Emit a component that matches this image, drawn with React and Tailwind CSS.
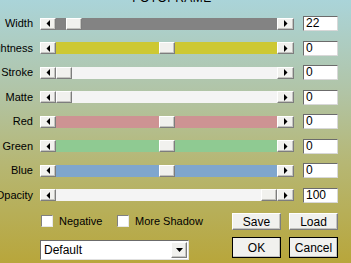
import React from 'react';

const rows = [
  { label: 'Width', track: 'bg-[#838383]', thumb: 66, value: '22' },
  { label: 'Brightness', track: 'bg-[#cdc833]', thumb: 159, value: '0' },
  { label: 'Stroke', track: 'bg-[#f4f4f4]', thumb: 56, value: '0' },
  { label: 'Matte', track: 'bg-[#f4f4f4]', thumb: 56, value: '0' },
  { label: 'Red', track: 'bg-[#cd9393]', thumb: 159, value: '0' },
  { label: 'Green', track: 'bg-[#8fca92]', thumb: 159, value: '0' },
  { label: 'Blue', track: 'bg-[#7fa6cd]', thumb: 159, value: '0' },
  { label: 'Opacity', track: 'bg-[#f4f4f4]', thumb: 261, value: '100' },
];

// raised 3D face used for scroll buttons, thumbs and push buttons
const raised =
  'bg-[#f1f1ee] border-t border-l border-t-white border-l-white border-b border-r border-b-[#7d7d7d] border-r-[#7d7d7d] shadow-[inset_-1px_-1px_0_#c4c4c0]';

const Arrow = ({ dir }) => (
  <svg width="4" height="7" viewBox="0 0 4 7">
    {dir === 'left' ? <path d="M4 0V7L0.5 3.5Z" fill="#000" /> : <path d="M0 0V7L3.5 3.5Z" fill="#000" />}
  </svg>
);

const Slider = ({ track, thumb }) => (
  <div className="flex h-[12px] w-[254px]">
    <div className={`${raised} w-[16px] h-full flex items-center justify-center shrink-0`}>
      <Arrow dir="left" />
    </div>
    <div className={`relative flex-1 h-full ${track}`}>
      <div className={`${raised} absolute top-0 h-full w-[16px]`} style={{ left: thumb - 56 }} />
    </div>
    <div className={`${raised} w-[17px] h-full flex items-center justify-center shrink-0`}>
      <Arrow dir="right" />
    </div>
  </div>
);

const Check = ({ label, className = '' }) => (
  <div className={`flex items-center gap-[6px] whitespace-nowrap shrink-0 leading-[12px] ${className}`}>
    <div className="w-[12px] h-[12px] shrink-0 bg-white border-t border-l border-[#808080] border-b-[#e8e8e8] border-r-[#e8e8e8] border-b border-r" />
    <span>{label}</span>
  </div>
);

const Button = ({ children, def }) => (
  <div
    className={`w-[49px] flex items-center justify-center ${raised} ${
      def ? 'h-[21px] outline outline-1 -outline-offset-1 outline-black' : 'h-[17px]'
    }`}
  >
    {children}
  </div>
);

export default function App() {
  return (
    <div
      className="w-[351px] h-[263px] overflow-hidden text-[11px] text-black bg-[linear-gradient(180deg,#aad4d9_0%,#b1c4a6_35%,#b6b774_62%,#b8a63b_100%)]"
      style={{ fontFamily: '"Liberation Sans", Arial, sans-serif' }}
    >
      <div className="-mt-[7px] h-[11px] leading-[11px] text-[12px] text-center pr-[7px] tracking-[0.5px]">FOTOFRAME</div>

      <div className="mt-[7.25px] flex flex-col">
        {rows.map((r) => (
          <div key={r.label} className="h-[24.5px] flex items-center">
            <div className="w-[33px] shrink-0 flex justify-end">
              <span className="whitespace-nowrap shrink-0">{r.label}</span>
            </div>
            <div className="ml-[7px]">
              <Slider track={r.track} thumb={r.thumb} />
            </div>
            <div className="ml-[9px] w-[35px] h-[15px] bg-white border-t border-l border-t-[#6b6b6b] border-l-[#6b6b6b] border-b border-r border-b-[#d8d8d8] border-r-[#d8d8d8] text-[12px] leading-[13px] pl-[2px]">
              {r.value}
            </div>
          </div>
        ))}
      </div>

      <div className="flex">
        <div className="pl-[41px] w-[191px] shrink-0 flex flex-col">
          <div className="mt-[8px] flex items-center">
            <Check label="Negative" className="w-[76px]" />
            <Check label="More Shadow" />
          </div>
          <div className="mt-[13px] ml-[-1px] w-[149px] h-[20px] flex items-center bg-white border-t border-l border-t-[#6b6b6b] border-l-[#6b6b6b] border-b border-r border-b-[#e0e0e0] border-r-[#e0e0e0]">
            <span className="flex-1 pl-[3px] text-[12px]">Default</span>
            <div className={`${raised} w-[16px] h-[16px] mr-[1px] flex items-center justify-center`}>
              <svg width="7" height="4" viewBox="0 0 7 4">
                <path d="M0 0H7L3.5 4Z" fill="#000" />
              </svg>
            </div>
          </div>
        </div>
        <div className="ml-[41px] flex flex-col">
          <div className="mt-[6px] flex gap-[8px]">
            <Button>
              <span className="text-[12px]">Save</span>
            </Button>
            <Button>
              <span className="text-[12px]">Load</span>
            </Button>
          </div>
          <div className="mt-[7px] flex gap-[8px]">
            <Button def>
              <span className="text-[12px]">OK</span>
            </Button>
            <Button def>
              <span className="text-[12px]">Cancel</span>
            </Button>
          </div>
        </div>
      </div>
    </div>
  );
}
